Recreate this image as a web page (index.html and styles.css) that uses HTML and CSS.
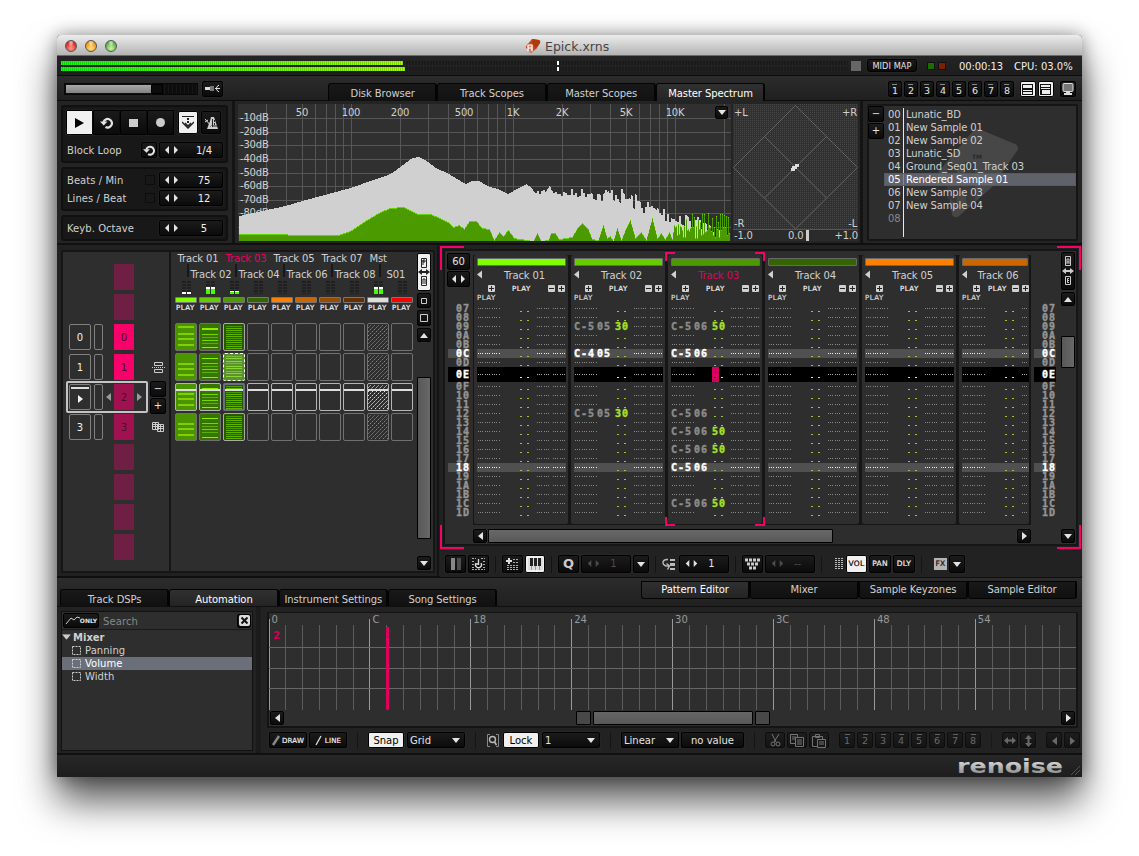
FILE: index.html
```html
<!DOCTYPE html>
<html lang="en">
<head>
<meta charset="utf-8">
<title>Epick.xrns</title>
<link rel="stylesheet" href="styles.css">
</head>
<body>
<svg class="defs" width="0" height="0">
  <defs>
    <symbol id="lr" viewBox="0 0 15 9"><path d="M5 0v8L1 4zM10 0v8l4-4z"/></symbol>
    <symbol id="up" viewBox="0 0 8 5"><path d="M4 0l4 5H0z"/></symbol>
    <symbol id="down" viewBox="0 0 8 5"><path d="M0 0h8L4 5z"/></symbol>
    <symbol id="left" viewBox="0 0 5 8"><path d="M5 0v8L0 4z"/></symbol>
    <symbol id="right" viewBox="0 0 5 8"><path d="M0 0v8l5-4z"/></symbol>
    <symbol id="loop" viewBox="0 0 14 12"><path d="M5.500 10A4.300 4.300 0 1 0 3.500 5" fill="none" stroke="currentColor" stroke-width="2.200"/><path d="M0 4.500h7.500L3.700 8.500z"/></symbol>
    <symbol id="plus" viewBox="0 0 7 7"><rect width="7" height="7" rx="1"/><path d="M3 1h1v2h2v1H4v2H3V4H1V3h2z" fill="#222"/></symbol>
    <symbol id="minus" viewBox="0 0 7 7"><rect width="7" height="7" rx="1"/><path d="M1 3h5v1H1z" fill="#222"/></symbol>
    <symbol id="box" viewBox="0 0 9 9"><path d="M.500 .500h8v8h-8z" fill="none" stroke="currentColor" stroke-dasharray="2 1"/></symbol>
  </defs>
</svg>
<main class="window">
  <header class="titlebar">
    <div class="lights"><i class="light red"></i><i class="light amber"></i><i class="light green"></i></div>
    <div class="doc">
      <svg width="17" height="17" viewBox="0 0 17 17"><path d="M7 1l7 1q2 1 1 3l-4 6-5 4q-2-1-2-3L1 10q-1-1 1-3z" fill="#c84a12"/><path d="M7 1l7 1q2 1 1 3l-4 6-4-6z" fill="#b03a08"/><path d="M2 7l6-1v8l-3 1z" fill="#d88060"/><path d="M3 7v6M7 7v6M3 10h4M3 7h4" stroke="#fff" stroke-width="1.2" fill="none"/></svg>
      <span>Epick.xrns</span>
    </div>
  </header>

  <section class="meter-row">
    <div class="meters"><div class="meter"><i class="level l1"></i><b></b></div><div class="meter"><i class="level l2"></i><b></b></div></div>
    <i class="clip"></i>
    <span class="btn midi">MIDI MAP</span>
    <i class="led g"></i><i class="led r"></i>
    <span class="time">00:00:13</span><span class="cpu">CPU: 03.0%</span>
  </section>

  <section class="tab-row">
    <div class="volume"><i></i><b></b></div>
    <span class="btn plug"><svg width="15" height="8"><path d="M0 2h5v3H0z" fill="#ddd"/><path d="M5 1h4v5H5z" fill="#777"/><path d="M10 3.500h5M11 3.500l2-3h1M11 3.500l2 3h1" stroke="#ddd" fill="none"/></svg></span>
    <nav class="tabs top"><span>Disk Browser</span><span>Track Scopes</span><span>Master Scopes</span><span class="on">Master Spectrum</span></nav>
    <div class="views" id="views"></div>
    <span class="btn lay one-up lit"><svg width="11" height="11"><path d="M0 0h11v11H0z" fill="#111"/><path d="M1 1h9v3H1zM1 6h9v1H1zM1 8h9v2H1z" fill="#eee"/></svg></span>
    <span class="btn lay two-up lit"><svg width="11" height="11"><path d="M0 0h11v11H0z" fill="#111"/><path d="M1 1h9v2H1zM1 4h9v1H1zM2 6h8v4H2z" fill="#eee"/></svg></span>
    <span class="btn lay screen"><svg width="12" height="12"><rect x="1" y=".5" width="10" height="8" rx="1" fill="#777" stroke="#ddd"/><path d="M4 9h4v1h2v2H2v-2h2z" fill="#ddd"/></svg></span>
  </section>

  <section class="upper">
    <div class="transport">
      <div class="box play-box">
        <div class="keys">
          <span class="btn k lit"><svg width="9" height="10"><path d="M0 0l9 5-9 5z"/></svg></span><span class="btn k"><svg width="14" height="12"><use href="#loop"/></svg></span><span class="btn k"><i class="stop"></i></span><span class="btn k"><i class="rec"></i></span>
          <span class="btn follow lit"><svg width="12" height="14"><path d="M0 0h12v1H0zM5 2h2v2H5zM5 5h2v2H5z" fill="#222"/><path d="M0 6l6 6 6-6M3 7l3 3 3-3" fill="none" stroke="#222" stroke-width="1.3"/></svg></span>
          <span class="btn metro"><svg width="13" height="13"><path d="M6 1h3l4 12H2L5 5z" fill="#ccc"/><path d="M7.500 3v8M9.500 4v2M9.500 7v2M5 10h7" stroke="#222"/><path d="M0 3l7 8M0 6l3-2" stroke="#ddd"/></svg></span>
        </div>
        <div class="line"><label>Block Loop</label><span class="btn sq"><svg width="13" height="11"><use href="#loop"/></svg></span><span class="btn num"><svg width="15" height="9"><use href="#lr"/></svg><em>1/4</em></span></div>
      </div>
      <div class="box tempo">
        <div class="line"><label>Beats / Min</label><i class="check"></i><span class="btn num"><svg width="15" height="9"><use href="#lr"/></svg><em>75</em></span></div>
        <div class="line"><label>Lines / Beat</label><i class="check"></i><span class="btn num"><svg width="15" height="9"><use href="#lr"/></svg><em>12</em></span></div>
      </div>
      <div class="box octave"><div class="line"><label>Keyb. Octave</label><span class="btn num"><svg width="15" height="9"><use href="#lr"/></svg><em>5</em></span></div></div>
    </div>
    <div class="scopes">
      <svg id="spectrum" width="493" height="137" viewBox="238 104 493 137"></svg>
      <svg class="phase" width="125" height="137" viewBox="733 104 125 137">
        <defs><pattern id="dots" width="2" height="2" patternUnits="userSpaceOnUse"><rect width="2" height="2" fill="#303030"/><rect width="1" height="1" fill="#464646"/></pattern></defs>
        <rect x="733" y="104" width="125" height="125" fill="url(#dots)"/>
        <rect x="733" y="229" width="125" height="12" fill="#2b2b2b"/><path d="M733 229.5h125" stroke="#555"/>
        <path d="M795.500 105.500l62 62-62 61.500-62-61.500zM764.500 136.500l62 61.500M826.500 136.500l-62 61.500" fill="none" stroke="#666"/>
        <path d="M792 166h3v-2h4v3h-2v2h-2v2h-4v-3h1z" fill="#ddd"/>
        <g class="lbl"><text x="734" y="116">+L</text><text x="857" y="116" text-anchor="end">+R</text><text x="734" y="227">-R</text><text x="857" y="227" text-anchor="end">-L</text><text x="734" y="239">-1.0</text><text x="788" y="239">0.0</text><text x="858" y="239" text-anchor="end">+1.0</text></g>
        <rect x="806" y="230" width="3" height="11" fill="#ccc"/>
      </svg>
      <span class="btn menu"><svg width="8" height="5"><use href="#down"/></svg></span>
    </div>
    <div class="instruments">
      <div class="inst-box">
        <svg class="mark" width="92" height="92" viewBox="0 0 92 92"><path d="M44 2q2-3 6-2l36 15q5 2 2 7L63 58l-33 29q-4 3-7-1l-5-30-9-10q-1-2 2-5z" fill="#474747"/><path d="M18 35h10v16h8V33h10v40l-9 4V62l-9 4v9l-10-6z" fill="#3a3a3a"/><text x="43" y="30">TM</text></svg>
        <div class="pm"><span class="btn">−</span><span class="btn">+</span></div>
        <ol id="instruments"></ol>
      </div>
    </div>
  </section>

  <section class="middle">
    <div class="matrix-pane">
      <div class="matrix-box">
        <div class="sequencer" id="sequencer"></div>
        <div class="matrix">
          <div class="names one"><span>Track 01</span><span class="cur">Track 03</span><span>Track 05</span><span>Track 07</span><span>Mst</span></div>
          <div class="names two"><span>Track 02</span><span>Track 04</span><span>Track 06</span><span>Track 08</span><span class="send">S01</span></div>
          <div class="heads" id="heads"></div>
          <div class="cells" id="cells"></div>
        </div>
        <div class="vscroll m">
          <span class="btn lit pm-btn"><svg width="12" height="30" viewBox="0 0 12 30"><path d="M3.500 1.500h5v9h-5z" fill="none" stroke="#222"/><path d="M5 3h2v2H5v-2v5" fill="none" stroke="#222"/><path d="M0 15l4-3v2h4v-2l4 3-4 3v-2H4v2z" fill="#222"/><path d="M3.500 19.500h5v9h-5z" fill="none" stroke="#222"/><path d="M5 27v-5h2v5" fill="none" stroke="#222"/></svg></span>
          <span class="btn z1"><svg width="8" height="8"><path d="M1.500 1.500h5v5h-5z" fill="none" stroke="#ccc"/></svg></span>
          <span class="btn z2"><svg width="10" height="10"><path d="M1.500 1.500h7v7h-7z" fill="none" stroke="#ccc"/></svg></span>
          <span class="btn z3"><svg width="8" height="5"><use href="#up"/></svg></span>
          <i class="thumb"></i>
          <span class="btn z4"><svg width="8" height="5"><use href="#down"/></svg></span>
        </div>
      </div>
    </div>
    <div class="editor-pane">
      <div class="focus">
        <i class="c tl"></i><i class="c tr"></i><i class="c bl"></i><i class="c br"></i>
        <div class="editor-box">
          <div class="gutter left"><span class="btn g60">60</span><span class="btn gar"><svg width="15" height="9"><use href="#lr"/></svg></span><div class="nums" id="nums-left"></div></div>
          <div class="pattern">
            <div class="tracks" id="tracks"></div>
            <div class="hscroll"><span class="btn"><svg width="5" height="8"><use href="#left"/></svg></span><i class="thumb"></i><span class="btn end"><svg width="5" height="8"><use href="#right"/></svg></span></div>
          </div>
          <div class="gutter right"><div class="nums" id="nums-right"></div></div>
          <div class="vscroll e">
            <span class="btn ae"><svg width="12" height="32" viewBox="0 0 12 32"><path d="M3.500 1.500h5v9h-5z" fill="none" stroke="#ccc"/><path d="M5 9V4h2v5M5 7h2" fill="none" stroke="#ccc"/><path d="M0 16l4-3v2h4v-2l4 3-4 3v-2H4v2z" fill="#ccc"/><path d="M3.500 21.500h5v8h-5z" fill="none" stroke="#ccc"/><path d="M7 23.500H5.500v4H7M5 25.500h2" fill="none" stroke="#ccc"/></svg></span>
            <span class="btn z1"><svg width="8" height="5"><use href="#up"/></svg></span>
            <i class="thumb"></i>
            <span class="btn z4"><svg width="8" height="5"><use href="#down"/></svg></span>
          </div>
        </div>
      </div>
      <div class="editor-tools">
        <span class="btn w21"><svg width="11" height="12"><path d="M1 0h4v12H1z" fill="#888"/><path d="M7 0h4v12H7z" fill="#4c4c4c"/></svg></span>
        <span class="btn w21 g2"><svg width="13" height="12"><path d="M0 .500h4M9 .500h4M0 3.500h2M11 3.500h2M0 6.500h2M11 6.500h2M0 9.500h2M11 9.500h2M0 11.500h13" stroke="#aaa" stroke-dasharray="2 1"/><path d="M4 5a3 3 0 1 0 5 0M4 6h3M6.500 1v6" fill="none" stroke="#ddd" stroke-width="1.300"/></svg></span>
        <i class="sep s6"></i>
        <span class="btn w21 g6"><svg width="13" height="12"><path d="M2 0h2v2h2v2H4v2H2V4H0V2h2z" fill="#ddd"/><path d="M7 1.500h6M7 4.500h6M1 7.500h12M1 9.500h12M1 11.500h12" stroke="#aaa" stroke-dasharray="2 1"/></svg></span>
        <span class="btn w20 g2 lit"><svg width="15" height="12"><path d="M0 0h15v12H0z" fill="#ddd"/><path d="M2 0h3v8H2zM6 0h3v8H6zM10 0h3v8h-3z" fill="#222"/><path d="M3.500 8v4M7.500 8v4M11.500 8v4" stroke="#999"/></svg></span>
        <i class="sep s6"></i>
        <span class="btn w21 g6 q">Q</span>
        <span class="btn w50 g2 off"><svg width="15" height="8"><use href="#lr"/></svg><em>1</em></span>
        <span class="btn w16 g2"><svg width="8" height="5"><use href="#down"/></svg></span>
        <i class="sep s6"></i>
        <svg class="g6" width="14" height="13"><path d="M6 1.500C0 1 0 6 3 7.500q2 1 4 .500M4.500 5.500L7.500 8l-2 3.500" fill="none" stroke="#bbb" stroke-width="1.400"/><path d="M8 1h5v2H8zM8 5h5v3H8zM8 10h5v2H8z" fill="#bbb"/></svg>
        <span class="btn w50 g2b"><svg width="15" height="8"><use href="#lr"/></svg><em>1</em></span>
        <i class="sep s6"></i>
        <span class="btn w21 g6"><svg width="15" height="12"><path d="M0 2h15M2 6h11M4 10h7" stroke="#ccc" stroke-width="3" stroke-dasharray="3 1"/></svg></span>
        <span class="btn w50 g2 off"><svg width="15" height="8"><use href="#lr"/></svg><em>--</em></span>
        <i class="sep s6"></i>
        <svg class="g12" width="9" height="12"><path d="M1 .500h8M1 2.500h8M1 4.500h8M1 6.500h8M1 8.500h8M1 10.500h8" stroke="#bbb" stroke-dasharray="2 1"/></svg>
        <span class="btn w21 g3 px lit">VOL</span><span class="btn w22 g2 px">PAN</span><span class="btn w22 g2 px">DLY</span>
        <i class="sep s6"></i>
        <span class="fx px">FX</span><span class="btn w16 g2"><svg width="8" height="5"><use href="#down"/></svg></span>
      </div>
    </div>
  </section>

  <section class="lower">
    <div class="lower-tabs">
      <nav class="tabs low"><span>Track DSPs</span><span class="on">Automation</span><span>Instrument Settings</span><span>Song Settings</span></nav>
      <nav class="tabs hang"><span class="on">Pattern Editor</span><span>Mixer</span><span>Sample Keyzones</span><span>Sample Editor</span></nav>
    </div>
    <div class="lower-body">
      <div class="tree-pane">
        <div class="tree">
          <div class="search"><span class="btn only"><svg width="15" height="9"><path d="M1 8l5-6 3 2 3-3 3 1" fill="none" stroke="#ccc"/></svg>ONLY</span><span class="ph">Search</span><span class="btn x"><svg width="11" height="11"><rect width="11" height="11" rx="2" fill="#ddd"/><path d="M2.500 2.500l6 6M8.500 2.500l-6 6" stroke="#111" stroke-width="2"/></svg></span></div>
          <div class="node root"><svg width="9" height="6" viewBox="0 0 8 5"><use href="#down"/></svg>Mixer</div>
          <div class="node"><svg width="9" height="9"><use href="#box"/></svg>Panning</div>
          <div class="node sel"><svg width="9" height="9"><use href="#box"/></svg>Volume</div>
          <div class="node"><svg width="9" height="9"><use href="#box"/></svg>Width</div>
        </div>
      </div>
      <div class="auto-pane">
        <div class="auto-box">
          <svg id="auto" width="808" height="97" viewBox="269 613 808 97"></svg>
          <div class="auto-scroll"><span class="btn"><svg width="5" height="8"><use href="#left"/></svg></span><i class="thumb dim"></i><i class="thumb big"></i><i class="thumb dim"></i><span class="btn end"><svg width="5" height="8"><use href="#right"/></svg></span></div>
        </div>
        <div class="auto-tools">
          <span class="btn t38 px"><svg width="9" height="11"><path d="M1 10l6-9" stroke="#888" stroke-width="2.500"/></svg>DRAW</span>
          <span class="btn t38 g2 px"><svg width="9" height="11"><path d="M1 10l5-9" stroke="#ddd" stroke-width="1.300"/></svg>LINE</span>
          <i class="sep a1"></i>
          <span class="btn lit t36">Snap</span>
          <span class="btn combo c58 g3"><em>Grid</em><svg width="8" height="5"><use href="#down"/></svg></span>
          <i class="sep a2"></i>
          <svg class="mag" width="12" height="13"><path d="M3 .500H.500v12H3M9 .500h2.500v12H9" fill="none" stroke="#888"/><circle cx="5.500" cy="5.500" r="3" fill="none" stroke="#bbb" stroke-width="1.400"/><path d="M7.500 8l2 3" stroke="#bbb" stroke-width="1.600"/></svg>
          <span class="btn lit t36 g4">Lock</span>
          <span class="btn combo c58 g3"><em>1</em><svg width="8" height="5"><use href="#down"/></svg></span>
          <i class="sep a3"></i>
          <span class="btn combo c58"><em>Linear</em><svg width="8" height="5"><use href="#down"/></svg></span>
          <span class="btn t63 g2">no value</span>
          <i class="sep a4"></i>
          <div class="dimmed">
            <span class="btn t20"><svg width="11" height="13"><path d="M2 0l4 8M9 0L4 8" stroke="#aaa" fill="none"/><circle cx="3" cy="10" r="2" fill="none" stroke="#aaa"/><circle cx="8" cy="10" r="2" fill="none" stroke="#aaa"/></svg></span>
            <span class="btn t20"><svg width="14" height="13"><path d="M.500 .500h7v9h-7zM2 3h4M2 5h3" fill="none" stroke="#aaa"/><path d="M5.500 3.500h8v9h-8z" fill="#111" stroke="#aaa"/><path d="M7 6h5M7 8h5M7 10h5" stroke="#aaa"/></svg></span>
            <span class="btn t20"><svg width="14" height="14"><path d="M.500 2.500h10v10h-10zM3.500 .500h4v3h-4z" fill="none" stroke="#aaa"/><path d="M5.500 5.500h8v8h-8z" fill="#111" stroke="#aaa"/><path d="M7 8h5M7 10h5" stroke="#aaa"/></svg></span>
            <div class="views small" id="views2"></div>
            <i class="sep a5"></i>
            <span class="btn t16"><svg width="12" height="7" viewBox="0 0 12 7"><path d="M0 3.500l4-3.500v2.500h4V0l4 3.500-4 3.500V4.500H4V7z"/></svg></span>
            <span class="btn t16 g2"><svg width="7" height="12" viewBox="0 0 7 12"><path d="M3.500 0L7 4H4.500v4H7l-3.500 4L0 8h2.500V4H0z"/></svg></span>
            <span class="btn t16 g10"><svg width="5" height="8"><use href="#left"/></svg></span>
            <span class="btn t16 g2"><svg width="5" height="8"><use href="#right"/></svg></span>
          </div>
        </div>
      </div>
    </div>
  </section>
  <footer class="status">
    <svg width="125" height="22"><defs><linearGradient id="lg" x2="0" y2="1"><stop offset=".35" stop-color="#d0d0d0"/><stop offset="1" stop-color="#777"/></linearGradient></defs><text class="logo" x="0" y="18" textLength="106" lengthAdjust="spacingAndGlyphs" fill="url(#lg)">renoise</text><path d="M114 20l9-9M118 20l5-5" stroke="#555"/></svg>
  </footer>
</main>
<script src="app.js"></script>
</body>
</html>
```
FILE: app.js
```js
const $ = id => document.getElementById(id);
const use = (id, w, h) => `<svg width="${w}" height="${h}"><use href="#${id}"/></svg>`;
const range = n => [...Array(n).keys()];

const viewButtons = range(8).map(i => `<span class="btn"><i></i><b>${i + 1}</b></span>`).join('');
$('views').innerHTML = viewButtons;
$('views2').innerHTML = viewButtons;

$('instruments').innerHTML = ['Lunatic_BD', 'New Sample 01', 'New Sample 02', 'Lunatic_SD', 'Ground_Seq01_Track 03', 'Rendered Sample 01', 'New Sample 03', 'New Sample 04', '']
  .map((n, i) => `<li class="${i === 5 ? 'sel' : ''} ${n ? '' : 'empty'}"><b>0${i}</b><span>${n}</span></li>`).join('');

/* ---- spectrum ---- */
let seed = 7;
const rnd = () => (seed = (seed * 16807) % 2147483647) / 2147483647;
const at = (pts, x) => {
  for (let i = 1; i < pts.length; i++) if (x <= pts[i][0]) {
    const [a, b] = pts[i - 1], [c, d] = pts[i];
    return b + (d - b) * (x - a) / (c - a);
  }
  return pts[pts.length - 1][1];
};
const peak = [[239,216],[285,206],[302,201],[350,188],[370,181],[385,176],[393,172],[405,163],[412,158],[418,157],[425,160],[437,169],[447,173],[455,178],[465,184],[472,181],[479,181],[487,186],[500,190],[507,194],[513,191],[520,187],[526,184],[530,187],[535,193],[545,191],[549,187],[553,191],[562,194],[575,193],[590,192],[600,197],[612,193],[625,198],[635,202],[650,209],[665,214],[680,219],[700,225],[712,236],[730,240]];
const now = [[239,234],[254,233.5],[275,234],[300,235],[338,235],[350,231],[365,221],[380,212],[390,208],[403,207],[410,210],[418,214],[430,214],[440,218],[448,222],[453,227],[459,225],[464,229],[469,221],[476,221],[482,228],[489,229],[494,240],[499,232],[503,236],[508,230],[514,238],[520,239],[533,241],[537,233],[541,241],[548,240],[551,233],[555,233],[559,239],[572,237],[577,228],[582,223],[588,229],[592,239],[598,240],[603,225],[607,238],[610,236],[613,241],[617,228],[621,240],[625,230],[630,220],[635,238],[641,232],[646,240],[652,218],[657,238],[661,233],[665,239],[669,232],[672,239]];
/* one column per pixel keeps the curves stepped */
let p1 = '', p2 = '', caps = '';
let held = 0;
for (let x = 239; x <= 729; x++) {
  let a = at(peak, x), b = at(now, x);
  if (x > 535) {
    if (x % 2) held = (rnd() - .5) * Math.min(17, 3 + (x - 535) / 6);
    a += held;
  }
  if (x > 672) b = x % 2 ? 238 - rnd() * 12 : 231 - rnd() * (x > 688 ? 19 : 12);
  a = Math.min(241, Math.round(a)); b = Math.min(241, Math.round(b));
  p1 += `M${x} 241V${a}h1V241z`;
  p2 += `M${x} 241V${b}h1V241z`;
  if (b < 241) caps += `M${x} ${b}h1v1h-1z`;
}
const gx = [266, 286, 302, 315, 326, 335, 343, 351, 400, 428, 448, 464, 477, 488, 497, 505, 513, 562, 590, 610, 626, 639, 650, 659, 667, 675, 724];
const gy = [118, 132, 145, 159, 173, 186, 200, 213, 227];
$('spectrum').innerHTML = `<rect x="238" y="104" width="493" height="137" fill="#303030"/>
<path d="${gx.map(x => `M${x + .5} 104v137`).join('')}${gy.map(y => `M238 ${y + .5}h493`).join('')}" stroke="#565656"/>
<g class="lbl">${[121, 135, 148, 162, 176, 189, 203, 216].map((y, i) => `<text x="240" y="${y}">-${i + 1}0dB</text>`).join('')}
${[[302, '50'], [351, '100'], [400, '200'], [464, '500'], [513, '1K'], [562, '2K'], [626, '5K'], [675, '10K']].map(([x, t]) => `<text x="${x}" y="116" text-anchor="middle">${t}</text>`).join('')}</g>
<path d="${p1}" fill="#d0d0d0" shape-rendering="crispEdges"/><path d="${p2}" fill="#4b9a00" shape-rendering="crispEdges"/><path d="${caps}" fill="#68d400" shape-rendering="crispEdges"/>`;

/* ---- sequencer ---- */
$('sequencer').innerHTML = range(10).map(i => {
  const n = i - 2, real = n >= 0 && n < 4;
  const tone = n === 0 || n === 1 ? 'hot' : real ? 'warm' : '';
  return `<div class="seq ${n === 2 ? 'current' : ''}">
    <span class="slot ${real ? '' : 'none'}">${n === 2 ? '<u></u>' + use('right', 5, 8) : real ? n : ''}</span>
    <span class="narrow ${real ? '' : 'none'}"></span>
    <span class="arr">${n === 2 ? use('left', 5, 8) : ''}</span>
    <span class="pat ${tone}">${real ? n : ''}</span>
    <span class="arr">${n === 2 ? use('right', 5, 8) : ''}</span>
    <span class="act">${n === 1 ? '<svg width="13" height="11"><path d="M2.500 .500h8v3h-8zM2.500 7.500h8v3h-8z" fill="none" stroke="#ccc"/><path d="M0 5.500h13" stroke="#ccc" stroke-dasharray="1 1"/></svg>'
      : n === 2 ? '<b class="btn">−</b><b class="btn">+</b>'
      : n === 3 ? '<svg width="12" height="10"><path d="M.500 .500h6v7h-6zM.500 2.500h6M.500 4.500h6M3.500 .500v7M5.500 2.500h6v7h-6zM5.500 4.500h6M5.500 6.500h6M8.500 2.500v7" fill="none" stroke="#ccc"/></svg>' : ''}</span></div>`;
}).join('');

/* ---- pattern matrix ---- */
const colors = ['#80ff00', '#66cc00', '#4d9900', '#336600', '#ff8000', '#cc6600', '#994c00', '#663000', '#dddddd', '#ff0000'];
const vu = { 0: [0, 2], 1: [5, 2], 2: [2, 1], 8: [5, 2] };
$('heads').innerHTML = colors.map((c, i) => {
  const v = vu[i] || [0, 0];
  const bar = `<i style="background:linear-gradient(to top,#4f0 ${v[0]}px,#fff ${v[0]}px ${v[0] + v[1]}px,transparent ${v[0] + v[1]}px),repeating-linear-gradient(#202020 0 2px,#2e2e2e 2px 3px)"></i>`;
  return `<div class="head"><div class="vu">${bar}${bar}</div><div class="chip" style="background:${c}"></div><div class="px">PLAY</div></div>`;
}).join('');
$('cells').innerHTML = range(4).map(r => range(10).map(c => {
  let s = '', bg = '';
  const line = (y, col, h = 1) => `<rect x="3" y="${y}" width="16" height="${h}" fill="${col}"/>`;
  if (c === 0) { bg = '#4b9400'; s = (r ? [10, 15, 21] : [3, 10, 15, 21]).map(y => line(y, '#7fd000', 2)).join(''); }
  if (c === 1) { bg = '#387400'; s = line(5, '#86f000', r ? 1 : 2) + [11, 14, 17, 20].map((y, i) => line(y - r % 2, i % 2 ? '#58b000' : '#74d800')).join('') + line(24, '#86f000'); }
  if (c === 2) { bg = '#285800'; s = range(12).map(i => line(3 + i * 2, i % 3 ? '#60b400' : '#4c9800')).join(''); }
  if (c === 2 && r === 1) { bg = '#5c9030'; s = range(9).map(i => line(3 + i * 2.5 | 0, i % 3 ? '#84d830' : '#78b848')).join(''); }
  if (c === 8) s = `<path d="${range(13).map(i => `M${-24 + i * 4} 26l24 -24`).join('')}" stroke="${r === 2 ? '#ddd' : '#888'}" stroke-dasharray="2 1" fill="none"/>`;
  const play = r === 2 ? '<rect x="1" y="6" width="20" height="2" fill="#ddd"/>' : '';
  return `<div class="cell ${r === 2 ? 'now' : ''} ${r === 1 && c === 2 ? 'cursor' : ''} ${c === 2 && r !== 1 ? 'deep' : ''}" style="background-color:${bg}"><svg width="20" height="26" viewBox="1 1 20 26">${s}${play}</svg></div>`;
}).join('')).join('');

/* ---- pattern editor ---- */
const lines = range(23).map(i => (i + 7).toString(16).toUpperCase().padStart(2, '0'));
const kind = l => l === '0E' ? 'play' : l === '0C' || l === '18' ? 'beat' : '';
const nums = lines.map(l => `<div class="${kind(l)}">${l}</div>`).join('');
$('nums-left').innerHTML = nums;
$('nums-right').innerHTML = nums;
const notes = {
  1: { '09': ['C-5', '05', '30'], '0C': ['C-4', '05', ''], '12': ['C-5', '05', '30'] },
  2: { '09': ['C-5', '06', '50'], '0C': ['C-5', '06', ''], '12': ['C-5', '06', ''], '14': ['C-5', '06', '50'], '16': ['C-5', '06', '50'], '18': ['C-5', '06', ''], '1C': ['C-5', '06', '50'] }
};
$('tracks').innerHTML = range(6).map(t => {
  const rows = lines.map(l => {
    const n = (notes[t] || {})[l];
    return `<div class="row ${kind(l)}">${n ? `<span class="note">${n[0]}</span><span class="ins">${n[1]}</span>` : '<i class="d note"></i><span class="ins"></span>'}${n && n[2] ? `<span class="vol">${n[2]}</span>` : `<span class="vol dash ${t === 2 && l === '0E' ? 'caret' : ''}"><i></i><i></i></span>`}<i class="d e1"></i><i class="d e2"></i></div>`;
  }).join('');
  return `<div class="track ${t === 2 ? 'picked' : ''} ${t === 5 ? 'cut' : ''}">${t === 2 ? '<i class="c tl"></i><i class="c tr"></i><i class="c bl"></i><i class="c br"></i>' : ''}
    <div class="chip" style="background:${colors[t]}"></div>
    <div class="tname">${use('left', 5, 8)}<span>Track 0${t + 1}</span></div>
    <div class="tbtn">${use('plus', 7, 7)}<span class="px">PLAY</span>${use('minus', 7, 7)}${use('plus', 7, 7)}</div>
    <div class="tplay px">PLAY</div>${rows}</div>`;
}).join('');

/* ---- automation grid ---- */
let g = '';
range(49).forEach(i => {
  const x = Math.floor(269 + i * 16.82) + .5;
  g += `<path d="M${x} ${i % 6 ? 625 : 619}V710" stroke="${i % 6 ? '#5c5c5c' : '#999'}"/>`;
});
g += '<path d="M269 647.500h808M269 668.500h808M269 688.500h808" stroke="#666"/>';
['0', 'C', '18', '24', '30', '3C', '48', '54'].forEach((t, i) => { g += `<text class="ruler" x="${271.5 + i * 100.9}" y="623">${t}</text>`; });
$('auto').innerHTML = g + '<rect x="386" y="627" width="3" height="83" fill="#e0005c"/><text class="seqno" x="273" y="639">2</text>';
```
FILE: styles.css
```css
*, ::before { box-sizing: border-box; }
html, body { margin: 0; }
body { width: 1139px; height: 856px; overflow: hidden; background: #fff; font: 10px/12px "DejaVu Sans", sans-serif; color: #d0d0d0; padding: 35px 57px 0; }
i, em, u { font-style: normal; text-decoration: none; }
svg { display: block; flex: none; fill: currentColor; }
.defs { position: absolute; }
.window { width: 1025px; height: 742px; display: flex; flex-direction: column; background: #232323; border-radius: 4px 4px 0 0; box-shadow: 0 24px 38px rgba(0,0,0,.66), 0 0 18px rgba(0,0,0,.4); }

.titlebar { height: 21px; flex: none; display: flex; align-items: center; border-radius: 4px 4px 0 0; background: linear-gradient(#ececec, #b4b4b4); border-bottom: 1px solid #6a6a6a; }
.lights { display: flex; gap: 8px; padding: 1px 0 0 8px; width: 468px; }
.light { width: 12px; height: 12px; border-radius: 50%; border: 1px solid #555; }
.red { background: radial-gradient(ellipse at 50% 10%, #fff8 15%, transparent 40%), radial-gradient(circle at 50% 75%, #ff9c90, #e0342c 60%, #a01810); }
.amber { background: radial-gradient(ellipse at 50% 10%, #fff8 15%, transparent 40%), radial-gradient(circle at 50% 75%, #ffe080, #f0a020 60%, #b06810); }
.green { background: radial-gradient(ellipse at 50% 10%, #fff8 15%, transparent 40%), radial-gradient(circle at 50% 75%, #c8f8a0, #68b84c 60%, #3c7c28); }
.doc { display: flex; align-items: center; gap: 3px; color: #444; font-size: 12.5px; line-height: 16px; padding-top: 3px; }

.btn { display: flex; align-items: center; justify-content: center; flex: none; background: linear-gradient(#1b1b1b, #0b0b0b); border: 1px solid #000; border-radius: 2px; color: #e4e4e4; font-weight: 400; box-shadow: 0 0 0 .5px #3a3a3a66; }
.btn.lit { background: #f0f0f0; color: #000; }
.px { font-size: 7px; letter-spacing: .5px; line-height: 8px; color: #f0f0f0; -webkit-text-stroke: .2px; }
.sep { flex: none; width: 1px; height: 17px; background: #151515; }
.thumb { display: block; flex: none; background: linear-gradient(90deg, #585858, #686868); border: 1px solid #000; border-radius: 1px; }
.c { position: absolute; border: 0 solid #f8006a; width: 24px; height: 24px; }
.c.tl { left: 0; top: 0; border-width: 2px 0 0 2px; }
.c.tr { right: 0; top: 0; border-width: 2px 2px 0 0; }
.c.bl { left: 0; bottom: 0; border-width: 0 0 2px 2px; }
.c.br { right: 0; bottom: 0; border-width: 0 2px 2px 0; }

.meter-row { height: 20px; flex: none; display: flex; align-items: center; padding-left: 4px; background: linear-gradient(#242424, #1e1e1e); border-bottom: 1px solid #0c0c0c; color: #f0f0f0; }
.meters { width: 787px; display: flex; flex-direction: column; gap: 2px; margin: 1px 3px 0 0; }
.meter { height: 4px; display: flex; background: repeating-linear-gradient(90deg, #1a1a1a 0 2px, #222 2px 3px); }
.level { background: repeating-linear-gradient(90deg, transparent 0 1px, #00000026 1px 2px), linear-gradient(90deg, #08ff08, #a0ff00); }
.l1 { width: 342px; margin-right: 154px; }
.l2 { width: 344px; margin-right: 152px; }
.meter b { width: 2px; background: #fff; }
.clip { width: 10px; height: 10px; background: #666; }
.midi { width: 50px; height: 13px; margin: 0 10px 0 6px; font-size: 8.200px; border-radius: 3px; letter-spacing: .1px; }
.led { width: 8px; height: 8px; margin: 1px 3px 0 0; border: 1px solid #111; }
.led.g { background: #1c6c00; } .led.r { background: #7c2000; }
.time { margin: 2px 0 0 10px; width: 54px; letter-spacing: -.1px; }
.cpu { margin: 2px 0 0 1px; white-space: nowrap; }

.tab-row { height: 25px; flex: none; display: flex; align-items: flex-start; padding: 5px 0 0 7px; background: linear-gradient(#2c2c2c, #1f1f1f); border-bottom: 1px solid #0c0c0c; }
.volume { width: 134px; height: 12px; margin: 2px 4px 0 0; display: flex; background: repeating-linear-gradient(90deg, #0d0d0d 0 3px, #161616 3px 4px); border: 1px solid #080808; padding: 1px; }
.volume i { width: 85px; background: linear-gradient(#a8a8a8, #828282); }
.volume b { width: 12px; background: #0c0c0c; border: 1px solid #000; margin: -1px 0; }
.plug { width: 21px; height: 16px; margin-right: 105px; }
.tabs { display: flex; }
.tabs span { display: flex; align-items: center; justify-content: center; background: linear-gradient(#191919, #111); border: 1px solid #040404; border-width: 1px 2px 1px 1px; white-space: nowrap; letter-spacing: -.08px; }
.tabs .on { background: linear-gradient(#303030, #242424); color: #fff; }
.top { margin-top: 2px; }
.top span { width: 109.300px; height: 18px; border-bottom: 0; border-radius: 3px 3px 0 0; padding: 2px 0 0 1px; }
.views { display: flex; gap: 2px; margin-left: 122.800px; }
.views .btn { width: 14px; height: 16px; flex-direction: column; justify-content: flex-start; padding-top: 2px; }
.views i { width: 5px; height: 1px; background: #888; margin-bottom: 1px; }
.views b { font-weight: 400; font-size: 9.500px; line-height: 10px; }
.lay { height: 16px; width: 16px; }
.one-up { margin-left: 6px; } .two-up { margin-left: 2px; } .screen { margin-left: 6px; }

.upper { height: 144px; flex: none; display: flex; background: #242424; border-bottom: 2px solid #101010; }
.transport { width: 178px; border-right: 3px solid #141414; padding: 4px 4px 0; display: flex; flex-direction: column; gap: 4px; }
.box { background: #181818; border: 2px solid #101010; border-radius: 3px; }
.play-box { height: 58px; padding: 3px 3px 0; }
.keys { display: flex; height: 25px; margin-bottom: 7px; }
.k { width: 27px; height: 25px; border-radius: 1px; }
.stop { width: 9px; height: 8px; background: #ccc; } .rec { width: 9px; height: 9px; border-radius: 50%; background: #ccc; }
.follow { width: 20px; height: 23px; margin: 1px 3px 0 4px; } .metro { width: 20px; height: 23px; margin-top: 1px; }
.line { display: flex; height: 16px; align-items: center; padding-left: 1px; }
.line label { flex: 1; letter-spacing: .05px; white-space: nowrap; padding-top: 1px; }
.sq { width: 16px; height: 16px; margin-right: 2px; }
.num { width: 64px; height: 16px; justify-content: flex-start; padding-left: 4px; }
.num em { flex: 1; text-align: center; padding: 1px 0 0 7px; color: #f0f0f0; }
.check { width: 10px; height: 10px; border: 1px solid #0d0d0d; margin-right: 4px; }
.tempo { height: 44px; padding: 3px 3px 0; display: flex; flex-direction: column; gap: 2px; }
.octave { height: 26px; padding: 3px 3px 0; }
.scopes { width: 628px; padding: 3px 3px 0; display: flex; gap: 2px; border-right: 3px solid #141414; position: relative; }
.menu { position: absolute; left: 480px; top: 5px; width: 13px; height: 13px; }
.lbl text { font-size: 10px; fill: #d0d0d0; letter-spacing: -.2px; }
.instruments { flex: 1; padding: 3px 4px 0 4px; }
.inst-box { position: relative; width: 211px; height: 137px; background: #2e2e2e; border: 2px solid #151515; border-radius: 2px; display: flex; }
.mark { position: absolute; left: 60px; top: 23px; }
.mark text { font-size: 6px; font-weight: 700; fill: #282828; }
.pm { width: 16px; display: flex; flex-direction: column; gap: 1px; z-index: 1; margin-left: -1px; }
.pm .btn { height: 16px; }
#instruments { flex: 1; list-style: none; margin: 2px 0 0; padding: 0; height: 129px; z-index: 1; background: linear-gradient(90deg, transparent 19px, #e8e8e8 19px 20px, transparent 20px); }
#instruments li { display: flex; height: 13px; line-height: 13px; letter-spacing: -.12px; }
#instruments b { width: 22px; padding-left: 4px; font-weight: 400; letter-spacing: -.2px; }
#instruments .empty { color: #888; }
#instruments .sel { background: #6b6f7acc; color: #fff; box-shadow: inset 0 0 0 1px #555a66; }

.middle { height: 333px; flex: none; display: flex; background: #212121; border-bottom: 2px solid #0e0e0e; }
.matrix-pane { width: 382px; padding: 5px 4px 0; border-right: 2px solid #141414; }
.matrix-box { width: 374px; height: 323px; border: 2px solid #161616; background: #2e2e2e; display: flex; border-radius: 2px; }
.sequencer { width: 108px; border-right: 2px solid #161616; padding-top: 10px; }
.seq { height: 30px; display: flex; align-items: center; padding-left: 6px; position: relative; }
.seq.current::before { content: ""; position: absolute; left: 3px; top: -1px; width: 82px; height: 32px; border: 2px solid #c4c4c4; border-radius: 2px; }
.slot, .narrow { height: 26px; border: 1px solid #808080; border-radius: 2px; display: flex; align-items: center; justify-content: center; color: #f0f0f0; }
.slot { width: 22px; margin-right: 3px; flex-direction: column; padding-top: 1px; }
.slot u { width: 18px; height: 2px; background: #ddd; margin: -6px 0 6px; }
.narrow { width: 9px; }
.none { visibility: hidden; }
.arr { width: 11px; display: flex; justify-content: center; color: #999; }
.pat { width: 20px; height: 26px; background: #701f44; display: flex; align-items: center; justify-content: center; color: #45122c; padding-top: 1px; }
.pat.hot { background: #f8006a; color: #400020; } .pat.warm { background: #a0124f; }
.act { width: 16px; margin-left: 5px; display: flex; flex-direction: column; gap: 1px; align-items: center; }
.act .btn { width: 16px; height: 16px; }
.matrix { width: 246px; padding: 0 0 0 4px; }
.names { display: flex; height: 13px; line-height: 14px; letter-spacing: -.15px; white-space: nowrap; }
.names span { width: 48px; flex: none; }
.one { padding-left: 2.500px; }
.two { padding-left: 15.500px; margin-top: 3px; }
.two span { position: relative; }
.two span::before { content: ""; position: absolute; left: -4px; top: -4px; width: 2px; height: 13px; background: #181818; }
.two .send { padding-left: 4px; width: 30px; }
.cur { color: #e8005c; }
.heads { display: flex; gap: 2px; }
.head { width: 22px; }
.vu { height: 13px; display: flex; gap: 1px; justify-content: center; margin-bottom: 3px; }
.vu i { width: 4px; }
.chip { height: 6px; border: 1px solid #777; border-radius: 1px; }
.head .px { margin-top: 1px; width: 24px; padding-left: 1px; }
.cells { display: grid; grid-template-columns: repeat(10, 22px); gap: 2px; margin-top: 11px; }
.cell { height: 28px; border: 1px solid #707070; border-radius: 2px; overflow: hidden; }
.cell.now { border-color: #b4b4b4; }
.cell.deep { border-color: #aaa; } .cell.now.deep { border: 2px solid #6a7080; } .cell.now.deep svg { margin: -1px; }
.cell.cursor { border: 1px dashed #fff; }
.vscroll { display: flex; flex-direction: column; width: 14px; }
.vscroll .thumb, .vscroll .btn { width: 14px; }
.m { padding-top: 1px; } .m .pm-btn { height: 38px; }
.m .z1 { height: 15px; margin-top: 2px; } .m .z2 { height: 16px; margin-top: 2px; } .m .z3 { height: 14px; margin-top: 2px; }
.m .thumb { height: 162px; margin-top: 35px; } .m .z4 { height: 14px; margin-top: 17px; }

.editor-pane { flex: 1; padding: 1px 1px 0 1px; }
.focus { position: relative; height: 303px; width: 641px; padding: 3px; }
.editor-box { height: 297px; border: 2px solid #161616; background: #2d2d2d; display: flex; padding-left: 2px; }
.gutter { width: 26px; display: flex; flex-direction: column; padding-top: 2px; }
.g60 { height: 17px; width: 23px; } .gar { height: 16px; width: 23px; margin-top: 1px; }
.nums { width: 22px; margin: 17px 0 0 1px; font: 700 10px/9px "DejaVu Sans Mono", monospace; letter-spacing: 1px; color: #949494; text-align: right; -webkit-text-stroke: .4px; }
.nums div { height: 9px; }
.nums .beat { background: #505050; color: #fff; } .nums .play { background: #000; color: #fff; height: 15px; line-height: 15px; }
.right .nums { margin: 51px 0 0 3px; }
.right { width: 31px; }
.pattern { width: 558px; margin-top: 4px; }
.tracks { display: flex; gap: 3px; height: 270px; background: #161616; padding: 0 0 1px 1px; }
.track { position: relative; width: 94px; flex: none; background: #2e2e2e; border-radius: 2px; padding: 3px 2px 0 3px; }
.cut { width: 70px; overflow: hidden; padding-right: 0; }
.cut .chip { width: 66px; }
.track > .c { width: 10px; height: 9px; } .track > .tl, .track > .tr { top: -3px; } .track > .bl, .track > .br { bottom: -2px; } .track > .tl, .track > .bl { left: -3px; } .track > .tr, .track > .br { right: -3px; }
.track .chip { height: 8px; border: 1px solid #686868; }
.tname { display: flex; align-items: center; height: 14px; margin-top: 3px; letter-spacing: -.15px; }
.tname svg { height: 9px; margin-bottom: 3px; }
.tname span { flex: 1; text-align: center; padding-left: 1px; white-space: nowrap; }
.picked .tname span { color: #e0005c; }
.cut .tname { width: 66px; }
.tbtn { display: flex; height: 11px; align-items: center; padding: 2px 0 0 11px; margin-top: -1px; }
.tbtn .px { margin: 0 16px 0 17px; width: 20px; }
.tbtn svg:last-child { margin-left: 3px; }
.cut .tbtn .px { margin: 0 4px 0 8px; }
.tplay { height: 9px; margin: 1px 0 1px; color: #d8d8d8; }
.row { height: 9px; width: 89px; display: flex; align-items: center; font: 700 10px/9px "DejaVu Sans Mono", monospace; letter-spacing: 1px; color: #8c8c8c; -webkit-text-stroke: .4px; --d: #888; --v: #9bc832; }
.row.beat { background: #505050; color: #fff; --d: #eee; }
.row.play { background: #000; height: 15px; color: #fff; --d: #aaa; --v: #ddd; }
.note { width: 23px; flex: none; } .ins { width: 18px; flex: none; } .vol { width: 19px; flex: none; color: #a8e028; white-space: nowrap; }
.d { height: 1px; flex: none; background: linear-gradient(90deg, var(--d) 1px, transparent 1px 2px, var(--d) 2px 3px, transparent 3px 4px, var(--d) 4px 5px, transparent 5px) 0 0 / 7px 1px repeat-x; }
.d.note { width: 22px; margin: 0 0 0 1px; }
.e1 { width: 13px; margin-right: 3px; } .e2 { width: 13px; }
.dash { display: flex; gap: 5px; height: 9px; align-items: flex-end; padding: 0 0 1px 2px; }
.dash i { width: 2px; height: 1px; background: var(--v); }
.caret { height: 15px; background: linear-gradient(90deg, #d8005c 7px, transparent 7px); padding-bottom: 4px; } .caret i:first-child { background: #300; }
.row.play .dash:not(.caret) { height: 15px; padding-bottom: 4px; }
.hscroll { display: flex; margin-top: 4px; gap: 2px; height: 14px; }
.hscroll .btn { width: 14px; } .hscroll .thumb { width: 345px; background: linear-gradient(#686868, #585858); margin-left: -1px; } .hscroll .end { margin-left: 182px; }
.e { width: 14px; padding-top: 1px; margin-left: -1px; } .ae { height: 38px; }
.e .z1 { height: 14px; margin-top: 2px; } .e .thumb { height: 32px; margin-top: 30px; } .e .z4 { height: 14px; margin-top: 161px; }
.editor-tools { display: flex; align-items: center; height: 28px; padding: 2px 0 0 5px; background: #222; }
.editor-tools .btn { height: 18px; } .w21 { width: 21px; } .w22 { width: 22px; } .w20 { width: 20px; } .w50 { width: 50px; } .w16 { width: 16px; }
.editor-tools .btn.w50 { justify-content: flex-start; padding-left: 4px; } .w50 em { flex: 1; text-align: center; padding-right: 4px; }
.g2 { margin-left: 2px; } .g2b { margin-left: 3px; } .g3 { margin-left: 3px; } .g4 { margin-left: 4px; } .g6 { margin-left: 6px; } .g12 { margin-left: 12px; } .s6 { margin-left: 6px; }
.off { color: #4c4c4c; } .q { font-size: 13px; font-weight: 700; color: #ccc; }
.editor-tools .px { font-size: 7.500px; letter-spacing: .3px; } .btn.lit.px { color: #000; }
.editor-tools .fx { width: 13px; height: 12px; margin-left: 12px; background: #b4b4b4; color: #111; line-height: 12px; text-align: center; }

.lower { height: 177px; flex: none; background: #222; border-bottom: 2px solid #101010; }
.lower-tabs { height: 29px; display: flex; justify-content: space-between; padding: 0 5px 0 3px; background: linear-gradient(#2c2c2c, #202020); border-bottom: 1px solid #101010; }
.low { margin-top: 11px; } .low span { width: 109.300px; height: 17px; border-bottom: 0; border-radius: 3px 3px 0 0; padding: 3px 0 0 1px; }
.hang { margin-top: 3px; } .hang span { width: 109px; height: 18px; border-radius: 0 0 3px 3px; padding-bottom: 1px; }
.lower-body { display: flex; height: 146px; }
.tree-pane { width: 204px; padding: 4px 4px 0; border-right: 5px solid #1b1b1b; }
.tree { width: 192px; height: 140px; border: 1px solid #111; background: #2e2e2e; }
.search { height: 18px; display: flex; align-items: center; padding: 0 1px 0; border-bottom: 1px solid #191919; }
.only { width: 36px; height: 15px; font-size: 6px; font-weight: 700; padding: 0; } .ph { color: #888; flex: 1; padding: 2px 0 0 4px; letter-spacing: .1px; } .x { width: 14px; height: 14px; }
.node { height: 13px; display: flex; align-items: center; gap: 4px; padding-left: 10px; letter-spacing: .05px; }
.node svg { margin-bottom: 1px; color: #ccc; }
.root { padding-left: 0; gap: 2px; font-weight: 700; margin-top: 1px; letter-spacing: 0; } .node.sel { background: #6b6f7a; color: #fff; }
.auto-pane { flex: 1; padding: 5px 0 0 6px; min-width: 0; }
.auto-box { width: 811px; height: 116px; border: 2px solid #141414; border-top-width: 1px; background: #2e2e2e; overflow: hidden; }
.auto-scroll { display: flex; height: 15px; padding: 1px 1px 0; }
.auto-scroll .btn { width: 14px; height: 14px; } .auto-scroll .thumb { height: 14px; width: 15px; background: #484848; } .auto-scroll .dim:nth-of-type(1) { margin-left: 292px; }
.auto-scroll .big { width: 160px; margin: 0 2px; background: linear-gradient(#666, #585858); } .auto-scroll .end { margin-left: 291px; }
.ruler { font-size: 10px; fill: #999; } .seqno { font-size: 10px; font-weight: 700; fill: #d0005c; }
.auto-tools { display: flex; align-items: center; margin-top: 4px; padding-left: 2px; height: 16px; }
.auto-tools .btn { height: 16px; padding-top: 1px; } .t38 { width: 38px; gap: 1px; } .t36 { width: 36px; } .t63 { width: 63px; } .t20 { width: 20px; } .t16 { width: 16px; }
.auto-tools .t38 { letter-spacing: .2px; }
.c58 { width: 58px; } .auto-tools .combo { justify-content: space-between; padding: 1px 4px 0 2px; white-space: nowrap; }
.a1 { margin: 0 10px; } .a2 { margin: 0 11px 0 10px; } .a3 { margin: 0 10px; } .a4 { margin: 0 10px; } .a5 { margin: 0 10px; }
.dimmed { display: flex; align-items: center; opacity: .6; } .dimmed .t20 { margin-right: 2px; }
.small { margin-left: 8px; } .small .btn { width: 16px; } .g10 { margin-left: 10px; } .dimmed .btn { color: #999; }
.status { flex: 1; background: linear-gradient(#272727, #1d1d1d); display: flex; justify-content: flex-end; }
.logo { font: 700 20px "DejaVu Sans", sans-serif; }
```
